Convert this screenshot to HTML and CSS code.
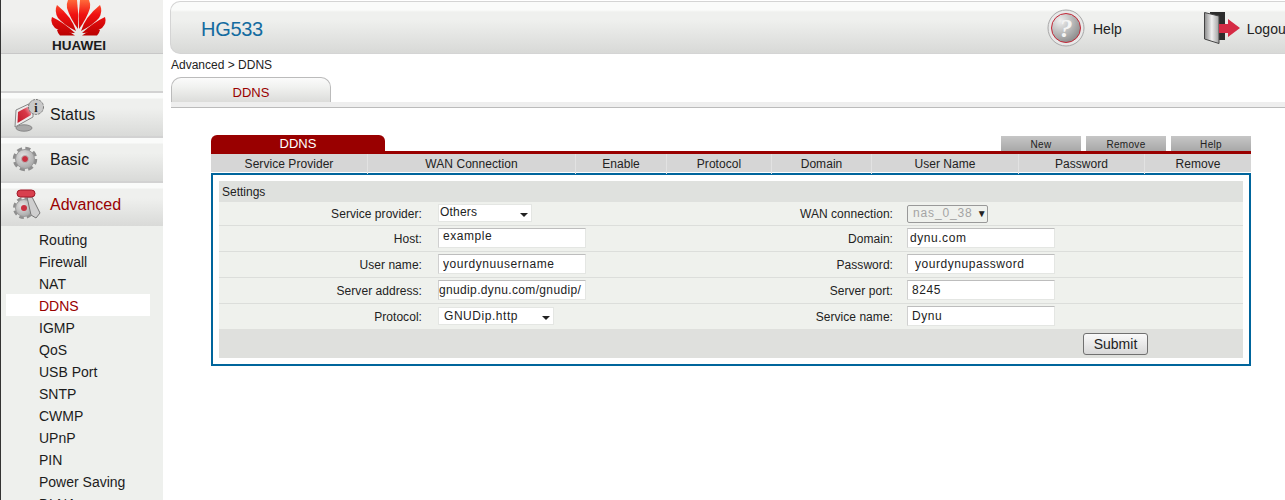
FILE: index.html
```html
<!DOCTYPE html>
<html lang="en">
  <head>
    <meta charset="UTF-8" />
    <title>HG533</title>
    <link rel="stylesheet" href="styles.css">
  </head>
  <body>
    <aside class="side">
      <div class="logo">
        <svg class="logo-mark" viewBox="51 0 56 37" width="56" height="37">
          <defs>
            <linearGradient id="petal" gradientUnits="userSpaceOnUse" x1="0" y1="0" x2="0" y2="36">
              <stop offset="0" stop-color="#ff6a3a" />
              <stop offset="0.4" stop-color="#f01212" />
              <stop offset="1" stop-color="#b80000" />
            </linearGradient>
            <g id="petals">
              <path d="M57 30Q66 29 75 35.5L60 35.5Q58 34 57 30Z" />
              <path d="M52 17Q63 22 75 33Q62 33 55 28Q50 23 52 17Z" />
              <path d="M57 5Q72 17 76 31Q64 25 58 18Q54 11 57 5Z" />
              <path d="M68 0L77 0Q79 15 78 29Q70 18 67 8Q66.5 3 68 0Z" />
            </g>
          </defs>
          <use href="#petals" fill="url(#petal)" />
          <use href="#petals" fill="url(#petal)" transform="translate(157 0) scale(-1 1)" />
        </svg>
        <div class="logo-name">HUAWEI</div>
      </div>
      <div class="side-gap"></div>
      <nav>
        <a class="nav-item">
          <svg class="nav-icon" viewBox="12 98 34 36" width="34" height="36">
            <defs>
              <linearGradient id="screen" x1="0" y1="1" x2="1" y2="0">
                <stop offset="0" stop-color="#c01828" />
                <stop offset="0.6" stop-color="#d83848" />
                <stop offset="1" stop-color="#f4d8dc" />
              </linearGradient>
            </defs>
            <ellipse cx="24" cy="128" rx="8" ry="3.2" fill="#a8a8a8" stroke="#888" />
            <path d="M16 110L33 102L33 117L15 127Z" fill="#ececec" stroke="#888" />
            <path d="M18 112L31 105L31 115L17.500 123Z" fill="url(#screen)" />
            <circle cx="36" cy="107" r="7.500" fill="#c9c9c9" stroke="#777" stroke-dasharray="2.500 1" />
            <text class="badge-i" x="36" y="111.500">i</text>
          </svg>
          <span>Status</span>
        </a>
        <a class="nav-item">
          <svg class="nav-icon" viewBox="12 143 34 36" width="34" height="36">
            <defs>
              <radialGradient id="gearface" cx="0.4" cy="0.35" r="0.8">
                <stop offset="0" stop-color="#e4e4e4" />
                <stop offset="1" stop-color="#9c9c9c" />
              </radialGradient>
            </defs>
            <circle cx="25" cy="159" r="10.500" fill="none" stroke="#8e8e8e" stroke-width="3.500" stroke-dasharray="5 3.250" />
            <circle cx="25" cy="159" r="9.500" fill="url(#gearface)" stroke="#9a9a9a" />
            <circle cx="25" cy="159" r="3.500" fill="#c83040" stroke="#b8b8b8" />
          </svg>
          <span>Basic</span>
        </a>
        <a class="nav-item nav-item-on">
          <svg class="nav-icon" viewBox="12 188 34 36" width="34" height="36">
            <circle cx="24" cy="208" r="9.500" fill="none" stroke="#8e8e8e" stroke-width="3" stroke-dasharray="4.500 3" />
            <circle cx="24" cy="208" r="8.500" fill="url(#gearface)" stroke="#9a9a9a" />
            <circle cx="24" cy="208" r="3" fill="#c83040" />
            <path d="M27 197L32 197L40 213L36 218L31 215Z" fill="#cfcfcf" stroke="#777" />
            <rect x="17" y="190" width="18" height="7" rx="3.500" fill="#d8404e" stroke="#a01828" />
          </svg>
          <span>Advanced</span>
        </a>
      </nav>
      <ul class="sub-menu">
        <li>Routing</li>
        <li>Firewall</li>
        <li>NAT</li>
        <li class="sub-on">DDNS</li>
        <li>IGMP</li>
        <li>QoS</li>
        <li>USB Port</li>
        <li>SNTP</li>
        <li>CWMP</li>
        <li>UPnP</li>
        <li>PIN</li>
        <li>Power Saving</li>
        <li>DLNA</li>
      </ul>
    </aside>

    <main class="main">
      <header class="top">
        <div class="brand">HG533</div>
        <svg class="help-icon" viewBox="1047 10 38 38" width="38" height="38">
          <defs>
            <radialGradient id="helpface" cx="0.3" cy="0.25" r="0.9">
              <stop offset="0" stop-color="#f0f0f0" />
              <stop offset="1" stop-color="#808080" />
            </radialGradient>
          </defs>
          <circle cx="1066" cy="29" r="18" fill="#e8e8e8" stroke="#a8a8a8" />
          <circle cx="1066" cy="29" r="14.500" fill="url(#helpface)" stroke="#c42838" />
          <text class="help-mark" x="1066" y="38">?</text>
        </svg>
        <span class="top-link">Help</span>
        <svg class="door-icon" viewBox="1203 11 37 33" width="37" height="33">
          <defs>
            <linearGradient id="doorface" x1="0" y1="0" x2="1" y2="0">
              <stop offset="0" stop-color="#8a8a8a" />
              <stop offset="0.5" stop-color="#f0f0f0" />
              <stop offset="1" stop-color="#a0a0a0" />
            </linearGradient>
          </defs>
          <path d="M1209 12L1224 12L1224 40L1218 40L1209 30Z" fill="#2c2c2c" />
          <path d="M1203.500 12.500L1218 16L1218 43.500L1203.500 39Z" fill="url(#doorface)" stroke="#444" />
          <path d="M1218 24L1227 24L1227 19L1239 28L1227 37L1227 33L1218 33Z" fill="#d52a44" />
        </svg>
        <span class="top-link">Logout</span>
      </header>

      <div class="crumb">Advanced &gt; DDNS</div>
      <div class="tab">DDNS</div>
      <div class="tab-rule"></div>

      <section class="content">
        <div class="bar">
          <div class="bar-title">DDNS</div>
          <div class="bar-btns">
            <button class="bar-btn">New</button>
            <button class="bar-btn">Remove</button>
            <button class="bar-btn">Help</button>
          </div>
        </div>
        <div class="cols">
          <div>Service Provider</div>
          <div>WAN Connection</div>
          <div>Enable</div>
          <div>Protocol</div>
          <div>Domain</div>
          <div>User Name</div>
          <div>Password</div>
          <div>Remove</div>
        </div>

        <form class="box">
          <div class="panel">
            <div class="panel-head">Settings</div>

            <div class="row row-first">
              <label>Service provider:</label>
              <div class="ctl">
                <span class="pick pick-provider">
                  <select><option>Others</option></select>
                </span>
              </div>
              <label>WAN connection:</label>
              <div class="ctl ctl-right">
                <span class="pick-off">nas_0_38 <i>▼</i></span>
              </div>
            </div>

            <div class="row">
              <label>Host:</label>
              <div class="ctl"><input class="raised" type="text" value="example"></div>
              <label>Domain:</label>
              <div class="ctl ctl-right"><input class="near" type="text" value="dynu.com"></div>
            </div>

            <div class="row">
              <label>User name:</label>
              <div class="ctl"><input type="text" value="yourdynuusername"></div>
              <label>Password:</label>
              <div class="ctl ctl-right"><input class="wide" type="text" value="yourdynupassword"></div>
            </div>

            <div class="row">
              <label>Server address:</label>
              <div class="ctl"><input class="tight" type="text" value="gnudip.dynu.com/gnudip/"></div>
              <label>Server port:</label>
              <div class="ctl ctl-right"><input type="text" value="8245"></div>
            </div>

            <div class="row row-last">
              <label>Protocol:</label>
              <div class="ctl">
                <span class="pick pick-protocol">
                  <select><option>GNUDip.http</option></select>
                </span>
              </div>
              <label>Service name:</label>
              <div class="ctl ctl-right"><input type="text" value="Dynu"></div>
            </div>

            <div class="panel-foot">
              <button class="submit" type="button">Submit</button>
            </div>
          </div>
        </form>
      </section>
    </main>
  </body>
</html>
```

FILE: styles.css
```css
html,
body {
  margin: 0;
  height: 500px;
  overflow: hidden;
  background: #fff;
}
body {
  display: flex;
  font-family: "Liberation Sans", Arial, sans-serif;
  font-size: 12px;
  color: #222;
}

/* left column */
.side {
  flex: 0 0 162px;
  border-left: 1px solid #333;
  background: #eef0ed;
}
.logo {
  height: 53px;
  padding-right: 6px;
  border-bottom: 1px solid #c8c8c8;
  background: linear-gradient(#f0f0ee, #f0f0ee 40%, #d9dad8);
  text-align: center;
  box-sizing: content-box;
  width: 156px;
}
.logo-mark {
  display: block;
  margin: 0 auto;
}
.logo-name {
  font-size: 13.500px;
  font-weight: 700;
  line-height: 15px;
  padding-top: 1px;
  color: #1a1a1a;
}
.side-gap {
  height: 37px;
}
.nav-item {
  display: flex;
  align-items: flex-start;
  box-sizing: border-box;
  height: 45px;
  padding-left: 11px;
  border-top: 2px solid #d2d2d2;
  background: linear-gradient(#fafbfa, #fafbfa 5px, #eff0ee 6px, #eff0ee 35%, #d9dad8);
  font-size: 16px;
  line-height: 44px;
  color: #1c1c1c;
}
.nav-icon {
  flex: none;
  margin: 5px 4px 0 0;
}
.nav-item-on {
  color: #990000;
}
.sub-menu {
  margin: 2px 0 0;
  padding: 0;
  list-style: none;
  font-size: 14px;
}
.sub-menu li {
  height: 22px;
  margin: 0 13px 0 5px;
  padding-left: 33px;
  line-height: 24px;
  color: #1c1c1c;
}
.sub-menu .sub-on {
  background: #fff;
  color: #990000;
}

/* right column */
.main {
  flex: 1;
  min-width: 0;
  overflow: hidden;
  padding-left: 7px;
}
.top {
  display: flex;
  align-items: center;
  box-sizing: border-box;
  height: 53px;
  margin-top: 1px;
  border: 1px solid #d4d4d4;
  border-right: 0;
  border-radius: 10px 0 0 10px;
  background: linear-gradient(#fafbfa, #fafbfa 8px, #eff0ee 10px, #eff0ee 35%, #d8d9d7);
  white-space: nowrap;
}
.brand {
  flex: 0 0 846px;
  padding: 3px 0 0 30px;
  font-size: 20px;
  letter-spacing: -0.3px;
  color: #136ba0;
}
.help-icon {
  flex: none;
  margin-right: 8px;
}
.help-mark {
  font-family: "Liberation Serif", serif;
  font-size: 26px;
  font-weight: 700;
  font-style: italic;
  fill: #f4f4f4;
  text-anchor: middle;
}
.badge-i {
  font-family: "Liberation Serif", serif;
  font-size: 12px;
  font-weight: 700;
  fill: #222;
  text-anchor: middle;
}
.top-link {
  flex: none;
  padding-top: 2px;
  font-size: 14px;
}
.door-icon {
  flex: none;
  margin: 0 6px 0 82px;
}
.crumb {
  height: 23px;
  padding-left: 1px;
  line-height: 23px;
}
.tab {
  box-sizing: border-box;
  width: 160px;
  height: 25px;
  margin-left: 1px;
  border: 1px solid #bbb;
  border-bottom: 0;
  border-radius: 10px 10px 0 0;
  background: linear-gradient(#fbfbfb, #f0f1ef 40%, #dcdcda);
  font-size: 13px;
  line-height: 30px;
  text-align: center;
  color: #990000;
}
.tab-rule {
  height: 3px;
  margin-left: 1px;
  margin-bottom: 27px;
  border-bottom: 2px solid #eee;
  box-shadow: inset 0 3px 0 #eee, 0 1px 0 #bbb;
  background: #eee;
}
.content {
  width: 1040px;
  margin-left: 41px;
  padding-top: 1px;
}
.bar {
  display: flex;
  justify-content: space-between;
  align-items: flex-end;
  height: 16px;
  border-bottom: 3px solid #990000;
}
.bar-title {
  width: 174px;
  height: 16px;
  border-radius: 6px 6px 0 0;
  background: #990000;
  font-size: 13px;
  line-height: 17px;
  text-align: center;
  color: #fff;
}
.bar-btns {
  display: flex;
  gap: 5px;
}
.bar-btn {
  width: 80px;
  height: 15px;
  padding: 0;
  border: 0;
  background: linear-gradient(#c6c6c6, #a8a8a8);
  font-family: inherit;
  font-size: 10px;
  letter-spacing: 0.3px;
  line-height: 17px;
  color: #222;
}
.cols {
  display: grid;
  grid-template-columns: 156px 208px 91px 105px 100px 147px 126px 107px;
  height: 18px;
  background: #d6d6d6;
  letter-spacing: 0.05px;
  line-height: 20px;
  text-align: center;
}
.cols div + div {
  border-left: 1px solid #e2e2e2;
}
.box {
  display: block;
  box-sizing: border-box;
  height: 193px;
  margin: 1px 0 0;
  padding: 6px;
  border: 2px solid #00659c;
}
.panel {
  background: #eff1ed;
}
.panel-head {
  height: 21px;
  padding-left: 3px;
  background: #dfe1de;
  line-height: 23px;
}
.row {
  display: grid;
  grid-template-columns: 203px 266px 205px 1fr;
  box-sizing: border-box;
  height: 26px;
  border-bottom: 1px solid #dcdedb;
}
.row-first {
  height: 24px;
}
.row-last {
  height: 25px;
  border-bottom: 0;
}
.row label {
  letter-spacing: 0.05px;
  line-height: 27px;
  text-align: right;
}
.row-first label {
  line-height: 25px;
}
.ctl {
  padding: 2px 0 0 16px;
}
.ctl-right {
  padding-left: 14px;
}
.row-last .ctl {
  padding-top: 3px;
}
.row-last .ctl-right {
  padding-top: 2px;
}
input {
  display: block;
  box-sizing: border-box;
  width: 148px;
  height: 20px;
  padding: 0 2px 0 4px;
  border: 1px solid #e4e6e3;
  border-top-color: #bdbdbd;
  border-left-color: #d0d0d0;
  background: #fff;
  font-family: inherit;
  font-size: 12px;
  letter-spacing: 0.55px;
  color: #222;
}
input.raised {
  padding-bottom: 4px;
}
input.near {
  padding-left: 2px;
}
input.tight {
  padding: 0;
  letter-spacing: 0.35px;
}
input.wide {
  padding-left: 7px;
}
.pick {
  display: block;
  position: relative;
  box-sizing: border-box;
  height: 18px;
  border: 1px solid #e4e6e3;
  background: #fff;
}
.pick-provider {
  width: 94px;
}
.pick-protocol {
  width: 116px;
}
.pick::after {
  content: "";
  position: absolute;
  right: 3px;
  top: 8px;
  border: 4px solid transparent;
  border-top: 4px solid #222;
  border-bottom: 0;
}
.pick select {
  display: block;
  width: 100%;
  height: 16px;
  padding: 0 0 2px 1px;
  border: 0;
  outline: 0;
  appearance: none;
  background: transparent;
  font-family: inherit;
  font-size: 12px;
  letter-spacing: 0.2px;
  color: #222;
}
.pick-protocol select {
  padding: 0 0 1px 5px;
  letter-spacing: 0.55px;
}
.pick-off {
  display: block;
  box-sizing: border-box;
  width: 81px;
  height: 18px;
  margin-top: 1px;
  padding-left: 5px;
  border: 1px solid #999;
  border-radius: 2px;
  background: #eff1ed;
  letter-spacing: 0.85px;
  line-height: 15px;
  color: #a4a4a4;
}
.pick-off i {
  font-size: 10px;
  font-style: normal;
  letter-spacing: 0;
  color: #222;
}
.panel-foot {
  display: flex;
  justify-content: flex-end;
  box-sizing: border-box;
  height: 29px;
  padding: 4px 95px 0 0;
  background: #dfe0dd;
}
.submit {
  width: 65px;
  height: 22px;
  padding: 0;
  border: 1px solid #707070;
  border-radius: 3px;
  background: linear-gradient(#fafafa, #d8d8d8);
  font-family: inherit;
  font-size: 14px;
  color: #222;
}
```
